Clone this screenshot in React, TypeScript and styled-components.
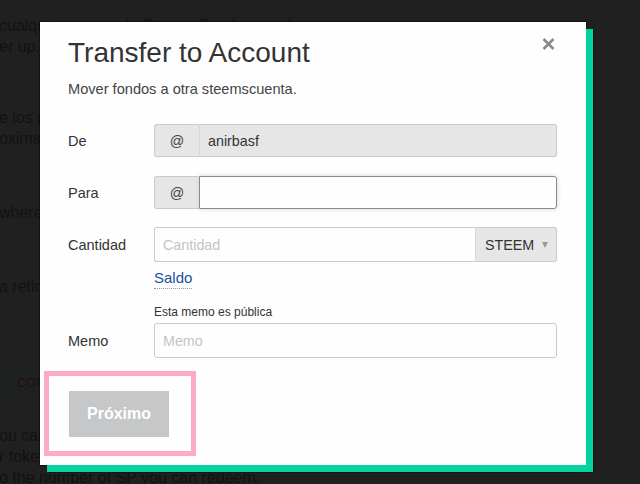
import React from "react";
import styled, { createGlobalStyle } from "styled-components";

const Global = createGlobalStyle`
  html, body { margin: 0; padding: 0; background: #202020; }
  body {
    width: 640px; height: 484px; overflow: hidden;
    font-family: "Liberation Sans", Arial, Helvetica, sans-serif;
  }
  * { box-sizing: border-box; }
`;

const Screen = styled.div`
  position: relative;
  width: 640px;
  height: 484px;
  overflow: hidden;
  background: #202020;
`;

/* dimmed page behind the dialog */
const Backdrop = styled.div`
  display: flex;
  flex-direction: column;
  align-items: flex-start;
  padding-top: 15px;
  margin-left: -1px;
  font-size: 16px;
  line-height: 21px;
  color: #121212;
`;

const Paragraph = styled.p<{ $gap: number }>`
  margin: ${(p) => p.$gap}px 0 0;
  white-space: nowrap;
`;

const GhostButton = styled.div<{ $gap: number }>`
  margin: ${(p) => p.$gap}px 0 0 8px;
  width: 96px;
  height: 26px;
  padding-left: 9px;
  border: 1px solid #0c2a1f;
  border-radius: 2px;
  font-size: 12px;
  line-height: 24px;
  color: #131313;
  letter-spacing: 0.5px;
`;

/* dialog */
const Dialog = styled.div`
  position: absolute;
  left: 40px;
  top: 22px;
  width: 546px;
  height: 443px;
  padding: 14px 29px 10px 28px;
  background: #fefefe;
  box-shadow: 7px 7px 0 0 #06d2a0, 8px 8px 0 0 #161616, 0 0 0 1px rgba(0, 0, 0, 0.4);
`;

const CloseButton = styled.button`
  position: absolute;
  top: 16px;
  right: 31px;
  width: 13px;
  height: 12px;
  padding: 0;
  border: 0;
  background: none;
  display: flex;
  cursor: pointer;
`;

const Title = styled.h2`
  margin: 0;
  font-size: 28px;
  line-height: 34px;
  font-weight: 400;
  color: #333;
`;

const Subtitle = styled.p`
  margin: 9px 0 0;
  font-size: 14.6px;
  line-height: 20px;
  color: #444;
`;

const Row = styled.div<{ $gap: number }>`
  display: grid;
  grid-template-columns: 86px 403px;
  align-items: start;
  margin-top: ${(p) => p.$gap}px;
`;

const Label = styled.label<{ $h: number; $end?: boolean }>`
  display: flex;
  align-items: center;
  height: ${(p) => p.$h}px;
  align-self: ${(p) => (p.$end ? "end" : "start")};
  font-size: 14.5px;
  color: #333;
`;

const FieldColumn = styled.div`
  display: flex;
  flex-direction: column;
  align-items: flex-start;
`;

const Group = styled.div<{ $h: number }>`
  display: flex;
  width: 100%;
  height: ${(p) => p.$h}px;
`;

const PrefixAddon = styled.span`
  flex: 0 0 45px;
  display: flex;
  align-items: center;
  justify-content: center;
  background: #e6e6e6;
  border: 1px solid #cacaca;
  border-right: 0;
  border-radius: 3px 0 0 3px;
  font-size: 14.3px;
  color: #444;
`;

const SuffixAddon = styled.span`
  flex: 0 0 82px;
  display: flex;
  align-items: center;
  gap: 8px;
  padding-left: 9px;
  background: #e6e6e6;
  border: 1px solid #cacaca;
  border-left: 1px solid #d8d8d8;
  border-radius: 0 3px 3px 0;
  font-size: 14.3px;
  color: #333;
`;

const Caret = styled.span`
  width: 0;
  height: 0;
  border-left: 3.5px solid transparent;
  border-right: 3.5px solid transparent;
  border-top: 6px solid #999;
  margin-top: 1px;
`;

type InputKind = "disabled" | "focused" | "plain" | "left";

const TextInput = styled.input<{ $kind: InputKind }>`
  flex: 1;
  min-width: 0;
  height: 100%;
  margin: 0;
  padding: 0 8px;
  font-family: "Liberation Sans", Arial, sans-serif;
  font-size: 14.3px;
  color: #333;
  outline: none;
  border: 1px solid
    ${(p) => (p.$kind === "focused" ? "#8a8a8a" : "#cacaca")};
  border-radius: ${(p) =>
    p.$kind === "plain" ? "3px" : p.$kind === "left" ? "3px 0 0 3px" : "0 3px 3px 0"};
  background: ${(p) => (p.$kind === "disabled" ? "#e6e6e6" : "#fefefe")};
  box-shadow: ${(p) => (p.$kind === "focused" ? "0 0 5px #d4d4d4" : "none")};
  border-left-color: ${(p) =>
    p.$kind === "disabled" ? "#d6d6d6" : p.$kind === "focused" ? "#8a8a8a" : "#cacaca"};
  ${(p) => (p.$kind === "left" ? "border-right: 0;" : "")}
  &::placeholder { color: #c4c4c4; }
`;

const BalanceLink = styled.a`
  margin-top: 6px;
  font-size: 15px;
  line-height: 20px;
  color: #1a5099;
  text-decoration: none;
  border-bottom: 1px dotted #8c9bb0;
`;

const Hint = styled.span`
  margin-bottom: 3px;
  font-size: 12px;
  line-height: 16px;
  color: #333;
`;

const Highlight = styled.div`
  width: fit-content;
  margin: 13px 0 0 -24px;
  padding: 15px 22px 14px 20px;
  border: 5px solid #fcaac8;
`;

const SubmitButton = styled.button`
  display: block;
  width: 100px;
  height: 46px;
  border: 0;
  border-radius: 0;
  background: #c6c7c8;
  color: #fff;
  font-family: "Liberation Sans", Arial, sans-serif;
  font-size: 16px;
  font-weight: 700;
  cursor: default;
`;

export default function App() {
  return (
    <>
      <Global />
      <Screen>
        <Backdrop>
          <Paragraph $gap={0}>
            cualquier cuenta de Steem. Puedes usarlo para
            <br />
            er up.
          </Paragraph>
          <Paragraph $gap={50}>
            e los pagos de recompensas se procesan
            <br />
            oximately every week.
          </Paragraph>
          <Paragraph $gap={53}>where you can see it.</Paragraph>
          <Paragraph $gap={53}>a retirar tu dinero en cualquier momento.</Paragraph>
          <GhostButton $gap={73}>COPY</GhostButton>
          <Paragraph $gap={29}>
            ou can see your balance
            <br />
            r tokens are converted
            <br />
            o the number of SP you can redeem.
          </Paragraph>
        </Backdrop>

        <Dialog role="dialog" aria-label="Transfer to Account">
          <CloseButton aria-label="Cerrar">
            <svg width="13" height="12" viewBox="0 0 13 12">
              <path
                d="M1.5 1 L11.5 11 M11.5 1 L1.5 11"
                stroke="#8a8a8a"
                strokeWidth="2.6"
                fill="none"
              />
            </svg>
          </CloseButton>

          <Title>Transfer to Account</Title>
          <Subtitle>Mover fondos a otra steemscuenta.</Subtitle>

          <Row $gap={25}>
            <Label $h={33}>De</Label>
            <Group $h={33}>
              <PrefixAddon>@</PrefixAddon>
              <TextInput $kind="disabled" value="anirbasf" readOnly />
            </Group>
          </Row>

          <Row $gap={19}>
            <Label $h={33}>Para</Label>
            <Group $h={33}>
              <PrefixAddon>@</PrefixAddon>
              <TextInput $kind="focused" defaultValue="" />
            </Group>
          </Row>

          <Row $gap={18}>
            <Label $h={35}>Cantidad</Label>
            <FieldColumn>
              <Group $h={35}>
                <TextInput $kind="left" placeholder="Cantidad" />
                <SuffixAddon>
                  STEEM
                  <Caret />
                </SuffixAddon>
              </Group>
              <BalanceLink>Saldo</BalanceLink>
            </FieldColumn>
          </Row>

          <Row $gap={15}>
            <Label $h={35} $end>
              Memo
            </Label>
            <FieldColumn>
              <Hint>Esta memo es pública</Hint>
              <Group $h={35}>
                <TextInput $kind="plain" placeholder="Memo" />
              </Group>
            </FieldColumn>
          </Row>

          <Highlight>
            <SubmitButton>Próximo</SubmitButton>
          </Highlight>
        </Dialog>
      </Screen>
    </>
  );
}
